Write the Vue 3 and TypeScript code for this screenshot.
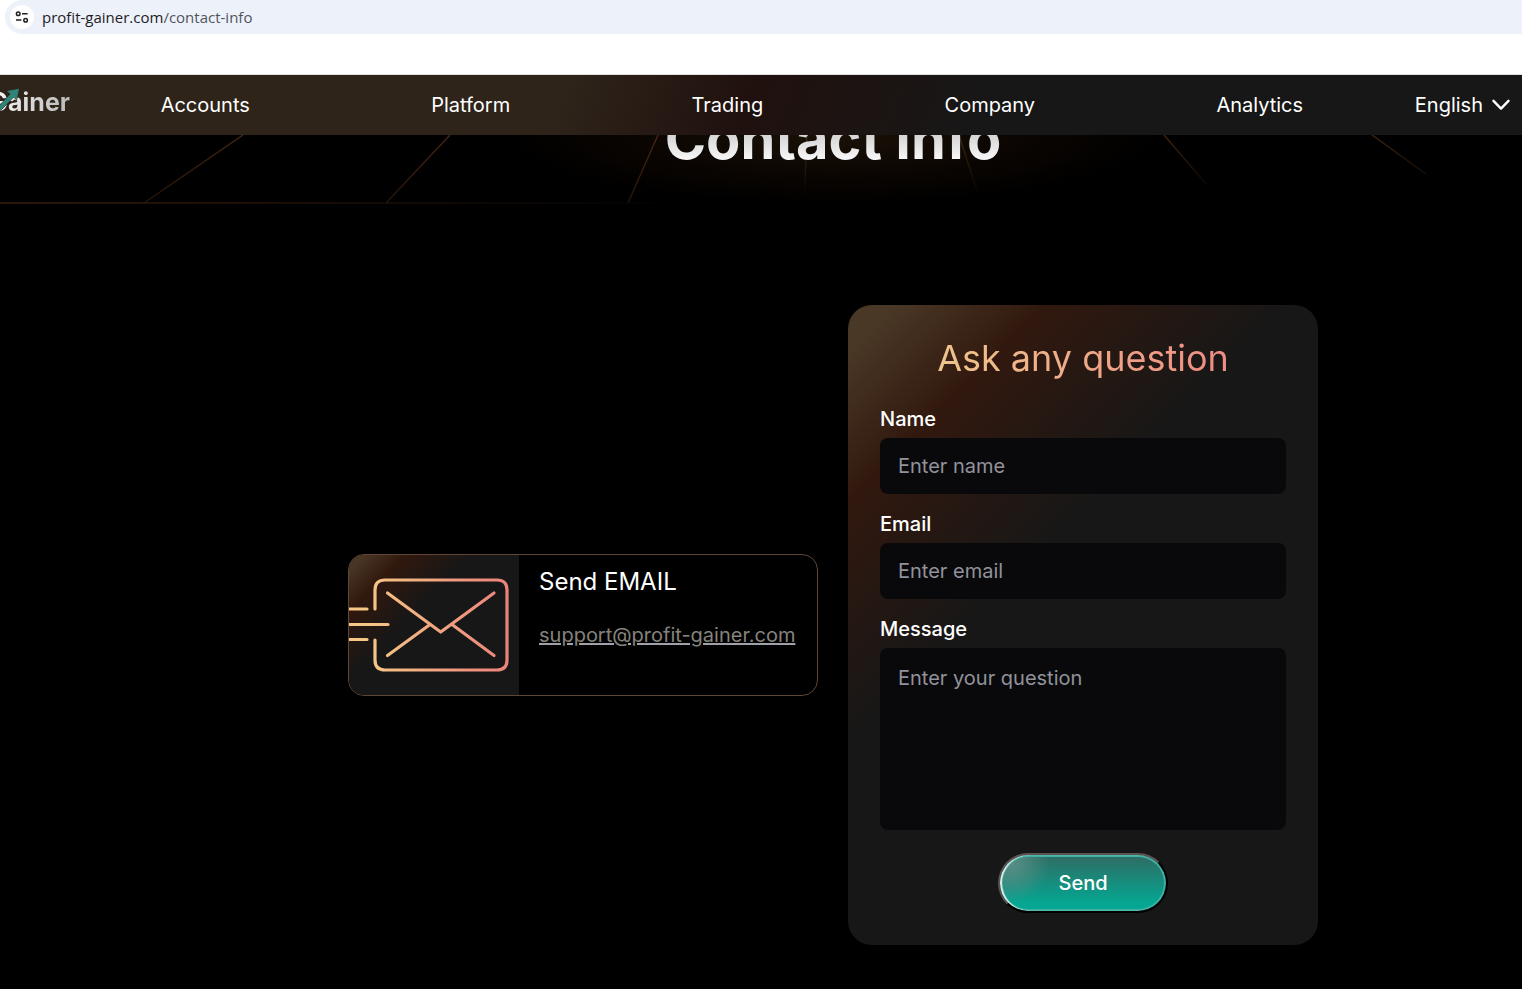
<script setup lang="ts">
import { reactive } from 'vue'

interface NavItem {
  label: string
  href: string
}

interface GridRay {
  x1: number
  y1: number
  x2: number
  y2: number
}

const navItems: NavItem[] = [
  { label: 'Accounts', href: '#accounts' },
  { label: 'Platform', href: '#platform' },
  { label: 'Trading', href: '#trading' },
  { label: 'Company', href: '#company' },
  { label: 'Analytics', href: '#analytics' },
]

const rays: GridRay[] = [
  { x1: 243, y1: 0, x2: 144, y2: 68 },
  { x1: 450, y1: 0, x2: 386, y2: 68 },
  { x1: 658, y1: 0, x2: 628, y2: 68 },
  { x1: 807, y1: 0, x2: 804, y2: 66 },
  { x1: 959, y1: 0, x2: 977, y2: 56 },
  { x1: 1164, y1: 0, x2: 1207, y2: 50 },
  { x1: 1372, y1: 0, x2: 1426, y2: 39 },
]

const form = reactive({ name: '', email: '', message: '' })
</script>

<template>
  <div class="screen">
    <div class="browser">
      <div class="address">
        <span class="site-info">
          <svg width="14" height="14" viewBox="0 0 14 14" fill="none" stroke="#202124" stroke-width="1.5">
            <circle cx="3.2" cy="3.7" r="1.8" />
            <path d="M7 3.7H12.6M1 10H6.4" />
            <circle cx="10.6" cy="10.2" r="1.8" />
          </svg>
        </span>
        <span class="url">profit-gainer.com<span class="url-path">/contact-info</span></span>
      </div>
    </div>

    <header class="topbar">
      <a class="logo" href="#home">
        <span class="logo-text">Gainer</span>
        <svg class="logo-arrow" width="20" height="26" viewBox="0 0 20 26">
          <path d="M-1 20L10.5 8L7 5L19 2.7L16.7 13.5L13.5 11L2 23L-1 25Z" fill="#2f8478" stroke="#2e241a" stroke-width="1" paint-order="stroke" />
        </svg>
      </a>
      <nav class="menu">
        <a v-for="item in navItems" :key="item.label" :href="item.href">{{ item.label }}</a>
      </nav>
      <button class="language" type="button">
        English
        <svg width="18" height="12" viewBox="0 0 18 12" fill="none" stroke="#fff" stroke-width="2.4" stroke-linecap="round" stroke-linejoin="round">
          <path d="M1.5 1.8L9 9.6L16.5 1.8" />
        </svg>
      </button>
    </header>

    <section class="hero">
      <svg class="hero-grid" width="1522" height="70" viewBox="0 0 1522 70" fill="none">
        <defs>
          <linearGradient id="ray" gradientUnits="userSpaceOnUse" x1="0" y1="0" x2="0" y2="68">
            <stop offset="0" stop-color="#4a2412" />
            <stop offset="1" stop-color="#23140a" />
          </linearGradient>
          <linearGradient id="rayFade" gradientUnits="userSpaceOnUse" x1="0" y1="0" x2="0" y2="60">
            <stop offset="0" stop-color="#40240f" />
            <stop offset="1" stop-color="#40240f" stop-opacity="0" />
          </linearGradient>
          <linearGradient id="horizon" gradientUnits="userSpaceOnUse" x1="0" y1="0" x2="700" y2="0">
            <stop offset="0" stop-color="#2a170a" />
            <stop offset="1" stop-color="#2a170a" stop-opacity="0" />
          </linearGradient>
        </defs>
        <line
          v-for="(ray, i) in rays"
          :key="ray.x1"
          :x1="ray.x1"
          :y1="ray.y1"
          :x2="ray.x2"
          :y2="ray.y2"
          :stroke="i < 3 ? 'url(#ray)' : 'url(#rayFade)'"
          stroke-width="1.4"
        />
        <rect x="0" y="67" width="700" height="2" fill="url(#horizon)" />
      </svg>
      <h1>Contact Info</h1>
    </section>

    <main class="content">
      <article class="mail-card">
        <div class="mail-art">
          <svg width="170" height="140" viewBox="0 0 170 140" fill="none" stroke="url(#warm)" stroke-width="3.2" stroke-linecap="round" stroke-linejoin="round">
            <defs>
              <linearGradient id="warm" gradientUnits="userSpaceOnUse" x1="20" y1="0" x2="158" y2="0">
                <stop offset="0" stop-color="#f5c685" />
                <stop offset="1" stop-color="#ec827c" />
              </linearGradient>
            </defs>
            <path d="M26 54V35Q26 25 36 25H148Q158 25 158 35V105Q158 115 148 115H36Q26 115 26 105V85" />
            <path d="M-2 54H18M-2 69.5H39M-2 84.5H18" />
            <path d="M38.5 38L91.7 77L145 38" />
            <path d="M38.5 100.5L81 69.5M145 100.5L103 69.5" />
          </svg>
        </div>
        <div class="mail-body">
          <h2>Send EMAIL</h2>
          <a href="mailto:support@profit-gainer.com">support@profit-gainer.com</a>
        </div>
      </article>

      <form class="ask" @submit.prevent>
        <h2 class="ask-title"><span>Ask any question</span></h2>
        <div class="field">
          <label for="name">Name</label>
          <input id="name" v-model="form.name" type="text" placeholder="Enter name" />
        </div>
        <div class="field">
          <label for="email">Email</label>
          <input id="email" v-model="form.email" type="email" placeholder="Enter email" />
        </div>
        <div class="field">
          <label for="message">Message</label>
          <textarea id="message" v-model="form.message" placeholder="Enter your question"></textarea>
        </div>
        <button class="send" type="submit">Send</button>
      </form>
    </main>
  </div>
</template>

<style>
body {
  margin: 0;
  background: #000;
}
</style>

<style scoped>
.screen {
  min-height: 100vh;
  overflow: hidden;
  background: #000;
  color: #fff;
  font-family: Inter, "Liberation Sans", sans-serif;
  box-sizing: border-box;
}

.browser {
  height: 74px;
  padding-left: 5px;
  background: #fff;
  border-bottom: 1px solid #dfe1e0;
}

.address {
  display: flex;
  align-items: center;
  gap: 8px;
  height: 34px;
  padding-left: 5px;
  border-radius: 17px 0 0 17px;
  background: #ecf1fa;
}

.site-info {
  display: flex;
  align-items: center;
  justify-content: center;
  width: 24px;
  height: 24px;
  border-radius: 50%;
  background: #fff;
}

.url {
  color: #1f2023;
  font: 15px/20px "Open Sans", "Noto Sans", sans-serif;
}

.url-path {
  color: #51555b;
}

.topbar {
  position: relative;
  z-index: 1;
  display: flex;
  align-items: center;
  height: 60px;
  background: linear-gradient(112deg, #2e241a 37%, #20110e 49%, #171717 65%);
}

.logo {
  position: relative;
  display: flex;
  justify-content: flex-end;
  flex: none;
  width: 70px;
  height: 60px;
  overflow: hidden;
  text-decoration: none;
}

.logo-text {
  background: linear-gradient(100deg, #fff, #b5b5b5);
  background-clip: text;
  color: transparent;
  font-size: 25px;
  line-height: 54px;
  font-weight: 700;
}

.logo-arrow {
  position: absolute;
  left: 0;
  top: 11px;
}

.menu {
  display: flex;
  flex: 1;
  justify-content: space-around;
}

.menu a,
.language {
  color: #fff;
  font-family: inherit;
  font-size: 20px;
  line-height: 30px;
  font-weight: 400;
  text-decoration: none;
}

.language {
  display: flex;
  align-items: center;
  gap: 9px;
  margin: 0 12px 0 21px;
  padding: 0;
  border: 0;
  background: none;
}

.hero {
  position: relative;
  display: flow-root;
  height: 70px;
  padding-left: 144px;
  background: radial-gradient(ellipse 330px 70px at 833px 0, #1a1207, #0a0502 60%, #000);
}

.hero-grid {
  position: absolute;
  left: 0;
  top: 0;
}

h1 {
  position: relative;
  margin: -31px 0 0;
  background: linear-gradient(#ccc 35%, #f8f8f8 80%);
  background-clip: text;
  color: transparent;
  font-size: 56px;
  line-height: 70px;
  font-weight: 700;
  text-align: center;
}

.content {
  display: flex;
  align-items: center;
  justify-content: center;
  gap: 30px;
  padding: 100px 0 44px 144px;
}

.mail-card {
  display: flex;
  width: 470px;
  box-sizing: border-box;
  overflow: hidden;
  border: 1px solid #5e4638;
  border-radius: 16px;
}

.mail-art,
.ask {
  background: linear-gradient(135deg, #4a3826 4%, #31180e 18%, #171717 40%);
}

.mail-art {
  flex: none;
  width: 170px;
  height: 140px;
}

.mail-body {
  padding: 9px 20px;
}

.mail-body h2 {
  margin: 0 0 20px;
  font-size: 24px;
  line-height: 36px;
  font-weight: 400;
}

.mail-body a {
  color: #85837d;
  font-size: 20px;
  line-height: 30px;
  text-decoration-color: #a1a1aa;
}

.ask {
  display: flex;
  flex-direction: column;
  width: 470px;
  box-sizing: border-box;
  padding: 32px;
  border-radius: 24px;
}

.ask-title {
  margin: 0 0 25px;
  font-size: 36px;
  line-height: 42px;
  font-weight: 400;
  text-align: center;
}

.ask-title span {
  background: linear-gradient(90deg, #eec58c, #ef8c84);
  background-clip: text;
  color: transparent;
}

.field {
  display: flex;
  flex-direction: column;
  gap: 4px;
  margin-bottom: 15px;
}

.field label {
  font-size: 20px;
  line-height: 30px;
  font-weight: 500;
}

.field input,
.field textarea {
  width: 100%;
  box-sizing: border-box;
  padding: 0 18px;
  border: 0;
  border-radius: 8px;
  background: #09090b;
  color: #fff;
  font-family: inherit;
  font-size: 20px;
  line-height: 28px;
}

.field input {
  height: 56px;
}

.field textarea {
  height: 182px;
  padding: 16px 18px;
  resize: none;
}

.field input::placeholder,
.field textarea::placeholder {
  color: #92929b;
}

.send {
  align-self: center;
  width: 170px;
  height: 60px;
  margin-top: 8px;
  border: 2px solid #000;
  border-color: #5b5353 #000 #000 #5b5353;
  border-radius: 30px;
  background:
    radial-gradient(circle at 10px 8px, #5c8f86 0, transparent 40px),
    linear-gradient(#2f6b62, #05a692 85%);
  box-shadow: inset 2px 0 1px #dff3f0, inset 0 0 0 2px #3fb0a1;
  color: #fff;
  font-family: inherit;
  font-size: 20px;
  font-weight: 500;
}
</style>
